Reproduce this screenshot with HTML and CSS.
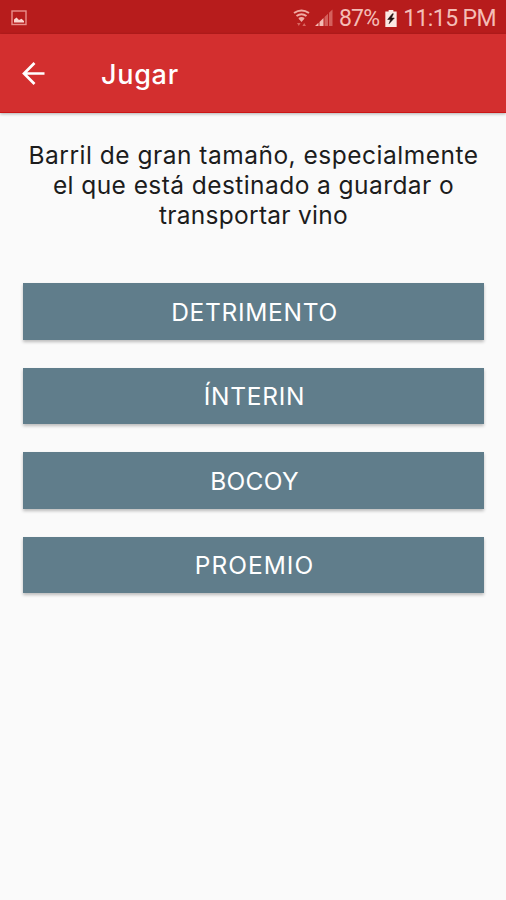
FILE: index.html
```html
<!DOCTYPE html>
<html lang="es">
<head>
    <meta charset="UTF-8">
    <meta name="viewport" content="width=device-width, initial-scale=1.0">
    <title>Jugar</title>
    <link rel="stylesheet" href="styles.css">
</head>
<body>
<div class="status-bar">
    <svg class="picture-icon" width="16" height="16" viewBox="0 0 16 16">
        <rect x="1" y="1" width="14" height="13.5" fill="none" stroke="#e98f8b" stroke-width="1.4"/>
        <path d="M3 12.5V9.5L5.5 7.5 8 10 10.5 8.8 13 11v1.5z" fill="#fbd5d0"/>
    </svg>
    <div class="status-right">
        <svg class="wifi-icon" width="17" height="18" viewBox="0 0 17 18">
            <path d="M1 4Q8.5-1 16 4M3.5 7Q8.5 3.3 13.5 7M6 9.8Q8.5 8 11 9.8" fill="none" stroke="#f0aaa3" stroke-width="2"/>
            <path d="M5.5 9.5h6L8.5 13z" fill="#f0aaa3"/>
            <path d="M4 14h3.6l-1.8 3zM9.4 17H13l-1.8-3z" fill="#d86660"/>
        </svg>
        <svg class="signal-icon" width="18" height="18" viewBox="0 0 18 18">
            <path d="M0 17h3.5v-3.2L0 17z" fill="#f4bbb3"/>
            <path d="M4.5 17h4V9l-4 4z" fill="#f4bbb3"/>
            <path d="M9.5 17H13V4.7L9.5 8zM14 17h3.5V.5L14 3.8z" fill="#d4605c"/>
        </svg>
        <span class="battery-text">87%</span>
        <svg class="battery-icon" width="12" height="17" viewBox="0 0 12 18">
            <path d="M3.5 0h5v1.5H12V18H0V1.5h3.5z" fill="#fbe9e4"/>
            <path d="M7.5 4L2.5 10h3L4 14.5 9.5 8.5h-3L8.5 4z" fill="#221010" stroke="#221010" stroke-width=".6"/>
        </svg>
        <span class="clock">11:15 PM</span>
    </div>
</div>
<div class="toolbar">
    <svg class="back-icon" width="24" height="24" viewBox="0 0 24 24">
        <path d="M22.5 11.5h-20M12.5 1L2 11.5 12.5 22" fill="none" stroke="#fff" stroke-width="2.7"/>
    </svg>
    <span class="title">Jugar</span>
</div>
<div class="content">
    <p class="question">
        <span class="line-1">Barril de gran tamaño, especialmente</span><br>
        <span class="line-2">el que está destinado a guardar o</span><br>
        <span class="line-3">transportar vino</span>
    </p>
    <div class="answers">
        <button class="answer">DETRIMENTO</button>
        <button class="answer">ÍNTERIN</button>
        <button class="answer bocoy">BOCOY</button>
        <button class="answer proemio">PROEMIO</button>
    </div>
</div>
</body>
</html>
```
FILE: styles.css
```css
body {
    margin: 0;
    height: 900px;
    overflow: hidden;
    background-color: #fafafa;
    font-family: Inter, "Open Sans", sans-serif;
}
.status-bar {
    display: flex;
    justify-content: space-between;
    align-items: center;
    height: 34px;
    padding: 2px 10px 0 11px;
    box-sizing: border-box;
    background-color: #b71c1c;
    color: #f4bdb6;
    font-family: Roboto, sans-serif;
    font-size: 23px;
}
.status-right {
    display: flex;
    align-items: center;
    white-space: nowrap;
}
.signal-icon {
    margin-left: 5px;
}
.battery-text {
    margin-left: 6px;
    letter-spacing: -0.8px;
}
.battery-icon {
    margin-left: 6px;
}
.clock {
    margin-left: 6px;
    letter-spacing: -0.6px;
}
.toolbar {
    display: flex;
    align-items: center;
    height: 76px;
    padding: 2px 0 0 22px;
    border-bottom: 1px solid #cc1515;
    background-color: #d32f2f;
    box-shadow: 0 1px 3px rgba(0, 0, 0, 0.3);
    color: #fff;
}
.title {
    margin-left: 55px;
    font-size: 27px;
    font-weight: 500;
    letter-spacing: 0.7px;
}
.content {
    padding: 27px 22px 0 23px;
}
.question {
    margin: 0;
    text-align: center;
    color: #1c1c1c;
    font-size: 24.5px;
    line-height: 30px;
    white-space: nowrap;
}
.line-1 {
    letter-spacing: 0.5px;
}
.line-2 {
    letter-spacing: 0.43px;
}
.line-3 {
    letter-spacing: 0.27px;
}
.answers {
    display: flex;
    flex-direction: column;
    gap: 28px;
    margin-top: 53px;
}
.answer {
    height: 56.5px;
    padding: 1px 0 0 2px;
    border: 0;
    background-color: #607d8b;
    box-shadow: 0 2px 3px rgba(0, 0, 0, 0.25);
    color: #fff;
    font-family: inherit;
    font-size: 24.5px;
    letter-spacing: 0.7px;
}
.bocoy {
    letter-spacing: 0.3px;
}
.proemio {
    letter-spacing: 1px;
}
```
